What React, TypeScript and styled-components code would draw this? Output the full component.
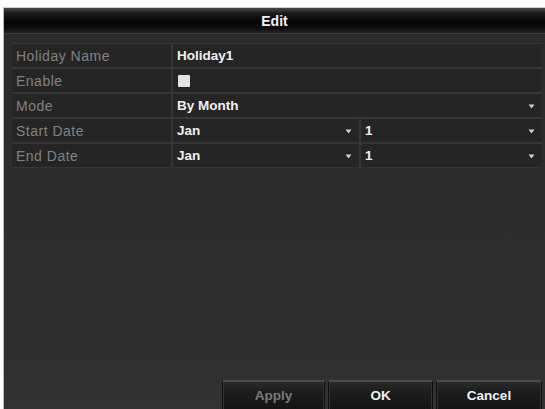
import * as React from "react";
import styled, { createGlobalStyle } from "styled-components";

const GlobalStyle = createGlobalStyle`
  html, body {
    margin: 0;
    padding: 0;
    background: #ffffff;
  }
  body {
    font-family: "Liberation Sans", Arial, sans-serif;
  }
`;

const Page = styled.div`
  width: 545px;
  height: 409px;
  padding: 7px 0 0 3px;
  box-sizing: border-box;
  overflow: hidden;
`;

const Window = styled.div`
  display: flex;
  flex-direction: column;
  height: 100%;
  border-left: 1px solid #b8b8b8;
  border-top: 1px solid #d0d0d0;
  background: linear-gradient(180deg, #2b2b2b 0%, #2e2e2e 85%, #333333 100%);
  box-sizing: border-box;
`;

const TitleBar = styled.div`
  height: 25px;
  display: flex;
  align-items: center;
  justify-content: center;
  background: linear-gradient(
    180deg,
    #4a4a4a 0%,
    #1c1c1c 20%,
    #050505 55%,
    #0c0c0c 80%,
    #232323 100%
  );
  border-bottom: 1px solid #3a3a3a;
  color: #f2f2f2;
  font-weight: 700;
  font-size: 14px;
`;

const Body = styled.div`
  flex: 1;
  display: flex;
  flex-direction: column;
  padding: 9px 3px 0 8px;
`;

const Table = styled.div`
  display: grid;
  grid-template-columns: 159px 1fr;
  grid-auto-rows: 23px;
  gap: 2px;
  background: #363636;
  padding: 1px 0;
`;

const Cell = styled.div`
  display: flex;
  align-items: center;
  background: #252525;
  padding: 0 4px;
  box-sizing: border-box;
  position: relative;
`;

const Label = styled(Cell)`
  color: #828282;
  font-size: 14px;
  letter-spacing: 0.5px;
`;

const Value = styled(Cell)`
  color: #f0f0f0;
  font-size: 13.5px;
  font-weight: 700;
`;

const Split = styled.div`
  display: grid;
  grid-template-columns: 186px 1fr;
  gap: 2px;
`;

const Check = styled.div`
  width: 12px;
  height: 12px;
  margin-left: 1px;
  background: #e2e2e2;
  border-radius: 1px;
`;

const Arrow = styled.svg`
  position: absolute;
  right: 7px;
  top: 50%;
  margin-top: -2px;
`;

const Spacer = styled.div`
  flex: 1;
`;

const ButtonBar = styled.div`
  display: flex;
  justify-content: flex-end;
  gap: 3px;
`;

const Button = styled.button<{ $width: number; $disabled?: boolean }>`
  width: ${(p) => p.$width}px;
  height: 29px;
  border: 1px solid #0e0e0e;
  border-top: 2px solid #4a4a4a;
  border-bottom: none;
  background: linear-gradient(180deg, #2a2a2a 0%, #1c1c1c 40%, #141414 100%);
  color: ${(p) => (p.$disabled ? "#7a7a7a" : "#f2f2f2")};
  font-family: "Liberation Sans", Arial, sans-serif;
  font-weight: 700;
  font-size: 13.5px;
  padding: 0;
  box-shadow: inset 1px 0 0 #333333, inset -1px 0 0 #333333;
`;

const DropArrow = () => (
  <Arrow width="7" height="5" viewBox="0 0 7 5">
    <path d="M0.5 0.5 L6.5 0.5 L3.5 4.5 Z" fill="#d0d0d0" />
  </Arrow>
);

export default function App() {
  return (
    <Page>
      <GlobalStyle />
      <Window>
        <TitleBar>Edit</TitleBar>
        <Body>
          <Table>
            <Label>Holiday Name</Label>
            <Value>Holiday1</Value>

            <Label>Enable</Label>
            <Value>
              <Check />
            </Value>

            <Label>Mode</Label>
            <Value>
              By Month
              <DropArrow />
            </Value>

            <Label>Start Date</Label>
            <Split>
              <Value>
                Jan
                <DropArrow />
              </Value>
              <Value>
                1
                <DropArrow />
              </Value>
            </Split>

            <Label>End Date</Label>
            <Split>
              <Value>
                Jan
                <DropArrow />
              </Value>
              <Value>
                1
                <DropArrow />
              </Value>
            </Split>
          </Table>
          <Spacer />
          <ButtonBar>
            <Button $width={103} $disabled>
              Apply
            </Button>
            <Button $width={105}>OK</Button>
            <Button $width={106}>Cancel</Button>
          </ButtonBar>
        </Body>
      </Window>
    </Page>
  );
}
